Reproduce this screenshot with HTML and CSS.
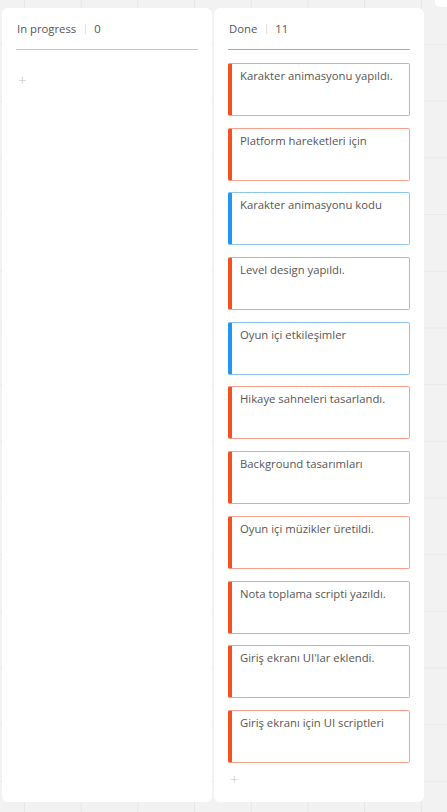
FILE: index.html
```html
<!DOCTYPE html>
<html lang="tr">
<head>
<meta charset="utf-8">
<title>Board</title>
<link rel="stylesheet" href="styles.css">
</head>
<body>
<div class="corner-panel"></div>
<main class="board">
  <section class="column">
    <header class="col-head col-head-yellow">
      <span class="col-title">In progress</span>
      <span class="col-sep"></span>
      <span class="col-count">0</span>
    </header>
    <div class="add add-empty">+</div>
  </section>
  <section class="column">
    <header class="col-head col-head-green">
      <span class="col-title">Done</span>
      <span class="col-sep"></span>
      <span class="col-count">11</span>
    </header>
    <div class="cards">
      <div class="card card-red">Karakter animasyonu yapıldı.</div>
      <div class="card card-red">Platform hareketleri için</div>
      <div class="card card-blue">Karakter animasyonu kodu</div>
      <div class="card card-red">Level design yapıldı.</div>
      <div class="card card-blue">Oyun içi etkileşimler</div>
      <div class="card card-red">Hikaye sahneleri tasarlandı.</div>
      <div class="card card-red">Background tasarımları</div>
      <div class="card card-red">Oyun içi müzikler üretildi.</div>
      <div class="card card-red">Nota toplama scripti yazıldı.</div>
      <div class="card card-red">Giriş ekranı UI'lar eklendi.</div>
      <div class="card card-red">Giriş ekranı için UI scriptleri</div>
    </div>
    <div class="add add-bottom">+</div>
  </section>
</main>
</body>
</html>
```
FILE: styles.css
```css
html, body {
  margin: 0;
  padding: 0;
  height: 100%;
}
body {
  width: 447px;
  height: 812px;
  overflow: hidden;
  position: relative;
  font-family: "Open Sans", "Noto Sans", sans-serif;
  color: #4d4d4d;
  background-color: #f2f2f2;
  background-image:
    linear-gradient(to right, #e6e6e6 1px, transparent 1px),
    linear-gradient(to bottom, #e9e9e9 1px, transparent 1px);
  background-size: 56.7px 56.7px, 56.7px 56.7px;
  background-position: 24px 0, 0 44px;
}
.corner-panel {
  position: absolute;
  top: 0;
  right: 0;
  width: 12px;
  height: 7px;
  background: #fff;
  border-bottom-left-radius: 5px;
}
.board {
  display: flex;
  gap: 2px;
  padding: 8px 0 0 2px;
}
.column {
  width: 210px;
  height: 794px;
  box-sizing: border-box;
  background: #fff;
  border-radius: 6px;
  padding: 0 14px;
  display: flex;
  flex-direction: column;
}
.col-head {
  display: flex;
  align-items: center;
  height: 42px;
  padding-top: 0;
  box-sizing: border-box;
  font-size: 11.3px;
  color: #555;
}
.col-head-yellow { border-bottom: 1px solid #f4c54a; }
.col-head-green { border-bottom: 1px solid #8cc75a; }
.col-title { padding-left: 1px; }
.col-sep {
  width: 1px;
  height: 10px;
  background: #e2e2e2;
  margin: 0 8px 0 9px;
}
.col-count { color: #555; }
.add {
  color: #c4c4c4;
  font-size: 15px;
  font-weight: 300;
  line-height: 16px;
  padding-left: 2px;
}
.add-empty { margin-top: 22px; }
.add-bottom { margin-top: 8px; }
.cards {
  display: flex;
  flex-direction: column;
  gap: 11.7px;
  margin-top: 13px;
}
.card {
  height: 53px;
  box-sizing: border-box;
  border: 1px solid #f7a08b;
  border-left: 4px solid #f4511e;
  border-radius: 2px;
  padding: 3px 6px 0 8px;
  font-size: 11.3px;
  line-height: 18px;
  color: #555;
}
.card-blue {
  border-color: #8ec6f1;
  border-left-color: #2196f3;
}
```
